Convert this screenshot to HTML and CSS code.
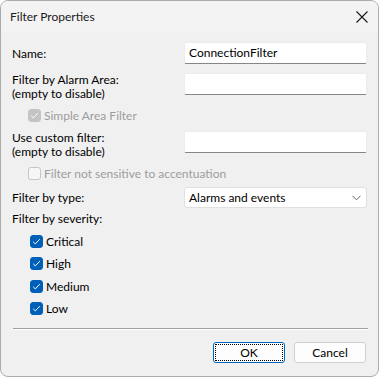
FILE: index.html
```html
<!DOCTYPE html>
<html lang="en">
<head>
<meta charset="UTF-8">
<meta name="viewport" content="width=device-width, initial-scale=1.0">
<title>Filter Properties</title>
<link rel="stylesheet" href="styles.css">
</head>
<body>
<div class="window">
  <div class="titlebar">
    <span class="title">Filter Properties</span>
    <svg class="close" width="12" height="12" viewBox="0 0 12 12">
      <path d="M0.5 0.5 L11.5 11.5 M11.5 0.5 L0.5 11.5" stroke="#1a1a1a" stroke-width="1.1" fill="none"/>
    </svg>
  </div>

  <div class="content">
    <div class="row row-name">
      <label class="label">Name:</label>
      <div class="input">ConnectionFilter</div>
    </div>

    <div class="row row-top">
      <label class="label">Filter by Alarm Area:<br>(empty to disable)</label>
      <div class="input"></div>
    </div>

    <div class="check-row sub disabled">
      <span class="box checked"><svg width="13" height="13" viewBox="0 0 13 13"><path d="M3.2 6.8 L5.3 8.9 L9.8 4.2" stroke="#fff" stroke-width="1" fill="none"/></svg></span>
      <span>Simple Area Filter</span>
    </div>

    <div class="row row-top">
      <label class="label">Use custom filter:<br>(empty to disable)</label>
      <div class="input"></div>
    </div>

    <div class="check-row sub disabled second">
      <span class="box"></span>
      <span>Filter not sensitive to accentuation</span>
    </div>

    <div class="row row-type">
      <label class="label">Filter by type:</label>
      <div class="combo">
        <span>Alarms and events</span>
        <svg width="9" height="6" viewBox="0 0 9 6"><path d="M0.5 0.8 L4.5 4.8 L8.5 0.8" stroke="#606060" stroke-width="1" fill="none"/></svg>
      </div>
    </div>

    <div class="severity-label">Filter by severity:</div>

    <div class="severity">
      <div class="check-row"><span class="box on"><svg width="13" height="13" viewBox="0 0 13 13"><path d="M3.2 6.8 L5.3 8.9 L9.8 4.2" stroke="#fff" stroke-width="1" fill="none"/></svg></span><span>Critical</span></div>
      <div class="check-row"><span class="box on"><svg width="13" height="13" viewBox="0 0 13 13"><path d="M3.2 6.8 L5.3 8.9 L9.8 4.2" stroke="#fff" stroke-width="1" fill="none"/></svg></span><span>High</span></div>
      <div class="check-row"><span class="box on"><svg width="13" height="13" viewBox="0 0 13 13"><path d="M3.2 6.8 L5.3 8.9 L9.8 4.2" stroke="#fff" stroke-width="1" fill="none"/></svg></span><span>Medium</span></div>
      <div class="check-row"><span class="box on"><svg width="13" height="13" viewBox="0 0 13 13"><path d="M3.2 6.8 L5.3 8.9 L9.8 4.2" stroke="#fff" stroke-width="1" fill="none"/></svg></span><span>Low</span></div>
    </div>

    <div class="separator"></div>

    <div class="buttons">
      <button class="btn default"><span class="focus">OK</span></button>
      <button class="btn">Cancel</button>
    </div>
  </div>
</div>
</body>
</html>
```

FILE: styles.css
```css
body {
  margin: 0;
  padding: 0;
  background-color: #fff;
  font-family: Lato, "Noto Sans", sans-serif;
  font-size: 12px;
  color: #000;
}

.window {
  width: 379px;
  height: 377px;
  box-sizing: border-box;
  border: 1px solid #ababab;
  border-radius: 8px;
  overflow: hidden;
  background-color: #f0f0f0;
}

.titlebar {
  height: 31px;
  background-color: #f3f3f3;
  display: flex;
  align-items: center;
  justify-content: space-between;
  padding: 0 10px 0 9px;
}

.title {
  font-size: 12px;
  color: #1a1a1a;
}

.close {
  margin-top: 1px;
}

.content {
  padding: 10px 10px 0 11px;
}

.row {
  display: grid;
  grid-template-columns: 172px 183px;
}

.row-name {
  align-items: center;
  margin-bottom: 9px;
}

.row-top {
  height: 22px;
}

.row-top .label {
  line-height: 14px;
}

.input {
  height: 22px;
  box-sizing: border-box;
  background-color: #fff;
  border: 1px solid #ececec;
  border-bottom-color: #868686;
  border-radius: 2px;
  padding: 0 4px;
  line-height: 20px;
  white-space: nowrap;
}

.check-row {
  display: flex;
  align-items: center;
  gap: 3px;
  height: 24px;
}

.check-row.sub {
  padding-left: 16px;
  margin: 8px 0 4px;
}

.check-row.second {
  margin: 8px 0 2px;
}

.disabled {
  color: #9d9d9d;
}

.box {
  width: 13px;
  height: 13px;
  box-sizing: border-box;
  border-radius: 3px;
  border: 1px solid #c6c6c6;
  background-color: #f6f6f6;
  display: flex;
  align-items: center;
  justify-content: center;
  flex-shrink: 0;
}

.box svg {
  display: block;
  margin: -1px;
}

.box.checked {
  background-color: #c4c4c4;
  border-color: #c4c4c4;
}

.box.on {
  background-color: #005fb8;
  border-color: #005fb8;
}

.row-type {
  align-items: center;
}

.combo {
  height: 21px;
  box-sizing: border-box;
  background-color: #fff;
  border: 1px solid #e0e0e0;
  border-radius: 3px;
  display: flex;
  align-items: center;
  justify-content: space-between;
  padding: 0 5px 0 4px;
}

.severity-label {
  height: 22px;
  line-height: 22px;
}

.severity {
  padding-left: 18px;
}

.severity .check-row {
  height: 22.5px;
}

.separator {
  height: 1px;
  background-color: #a0a0a0;
  border-bottom: 1px solid #fff;
  margin: 8px 0 0 1px;
  width: 355px;
}

.buttons {
  display: flex;
  justify-content: flex-end;
  gap: 9px;
  margin-top: 12px;
  padding-right: 2px;
}

.btn {
  width: 72px;
  height: 21px;
  box-sizing: border-box;
  font-family: inherit;
  font-size: 12px;
  color: #000;
  background-color: #fdfdfd;
  border: 1px solid #d0d0d0;
  border-radius: 3px;
  padding: 0;
}

.btn.default {
  border: 1px solid #0067c0;
  padding: 1px;
}

.focus {
  display: block;
  height: 100%;
  box-sizing: border-box;
  border: 1px dotted #000;
  line-height: 15px;
}
```
